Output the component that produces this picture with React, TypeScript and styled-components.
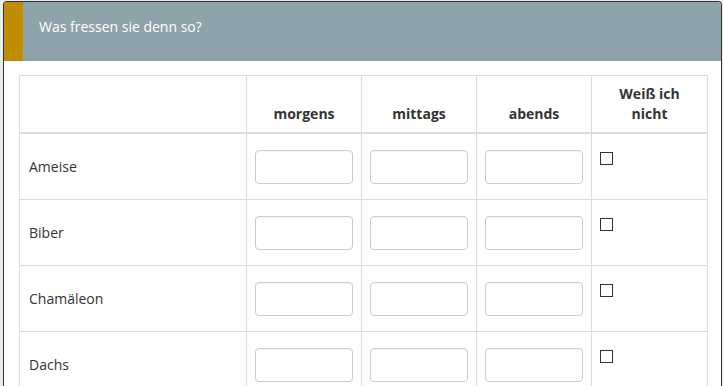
import React from "react";
import styled, { createGlobalStyle } from "styled-components";

const Global = createGlobalStyle`
  html, body { margin: 0; padding: 0; }
  body {
    background: #ececec;
    font-family: "Open Sans", "Noto Sans", Arial, sans-serif;
    font-size: 14px;
    color: #333;
  }
  * { box-sizing: border-box; }
`;

const Page = styled.div`
  padding: 1px 1px 0 3px;
  height: 386px;
  overflow: hidden;
`;

const Card = styled.section`
  border: 1px solid #2f3337;
  border-bottom: none;
  border-radius: 4px 4px 0 0;
  background: #fff;
  overflow: hidden;
  height: 400px;
`;

const Header = styled.header`
  display: flex;
  height: 59px;
  background: #8fa3aa;
`;

const Accent = styled.div`
  width: 19px;
  background: #c18d00;
`;

const Title = styled.h2`
  margin: 0;
  padding: 15px 0 0 16px;
  font-size: 14px;
  line-height: 20px;
  font-weight: 400;
  color: #fff;
`;

const Body = styled.div`
  padding: 14px 0 0 15px;
`;

const Table = styled.table`
  border-collapse: collapse;
  table-layout: fixed;
  width: 688px;
  border: 1px solid #ddd;
`;

const Th = styled.th`
  border: 1px solid #ddd;
  border-bottom: 2px solid #ddd;
  padding: 8px 8px 8px;
  height: 56px;
  vertical-align: bottom;
  text-align: center;
  font-weight: 700;
  line-height: 20px;
  color: #333;
`;

const Td = styled.td<{ $top?: boolean }>`
  border: 1px solid #ddd;
  padding: 16px 8px 15px;
  vertical-align: ${(p) => (p.$top ? "top" : "middle")};
  line-height: 20px;
`;

const LabelTd = styled(Td)`
  padding-left: 9px;
  color: #333;
`;

const TextInput = styled.input`
  display: block;
  width: 98px;
  height: 34px;
  margin: 0;
  border: 1px solid #ccc;
  border-radius: 4px;
  background: #fff;
  box-shadow: inset 0 1px 1px rgba(0, 0, 0, 0.04);
`;

const Check = styled.input`
  appearance: none;
  display: block;
  width: 13px;
  height: 13px;
  margin: 2px 0 0 0;
  border: 1px solid #333;
  border-radius: 0;
  background: #fff;
`;

const animals = ["Ameise", "Biber", "Chamäleon", "Dachs"];
const times = ["morgens", "mittags", "abends"];

export default function App() {
  return (
    <>
      <Global />
      <Page>
        <Card>
          <Header>
            <Accent />
            <Title>Was fressen sie denn so?</Title>
          </Header>
          <Body>
            <Table>
              <colgroup>
                <col style={{ width: 227 }} />
                <col style={{ width: 115 }} />
                <col style={{ width: 115 }} />
                <col style={{ width: 115 }} />
                <col style={{ width: 116 }} />
              </colgroup>
              <thead>
                <tr>
                  <Th />
                  {times.map((t) => (
                    <Th key={t}>{t}</Th>
                  ))}
                  <Th>
                    Weiß ich
                    <br />
                    nicht
                  </Th>
                </tr>
              </thead>
              <tbody>
                {animals.map((a) => (
                  <tr key={a}>
                    <LabelTd>{a}</LabelTd>
                    {times.map((t) => (
                      <Td key={t}>
                        <TextInput type="text" aria-label={`${a} ${t}`} />
                      </Td>
                    ))}
                    <Td $top>
                      <Check type="checkbox" aria-label={`${a} weiß ich nicht`} />
                    </Td>
                  </tr>
                ))}
              </tbody>
            </Table>
          </Body>
        </Card>
      </Page>
    </>
  );
}
